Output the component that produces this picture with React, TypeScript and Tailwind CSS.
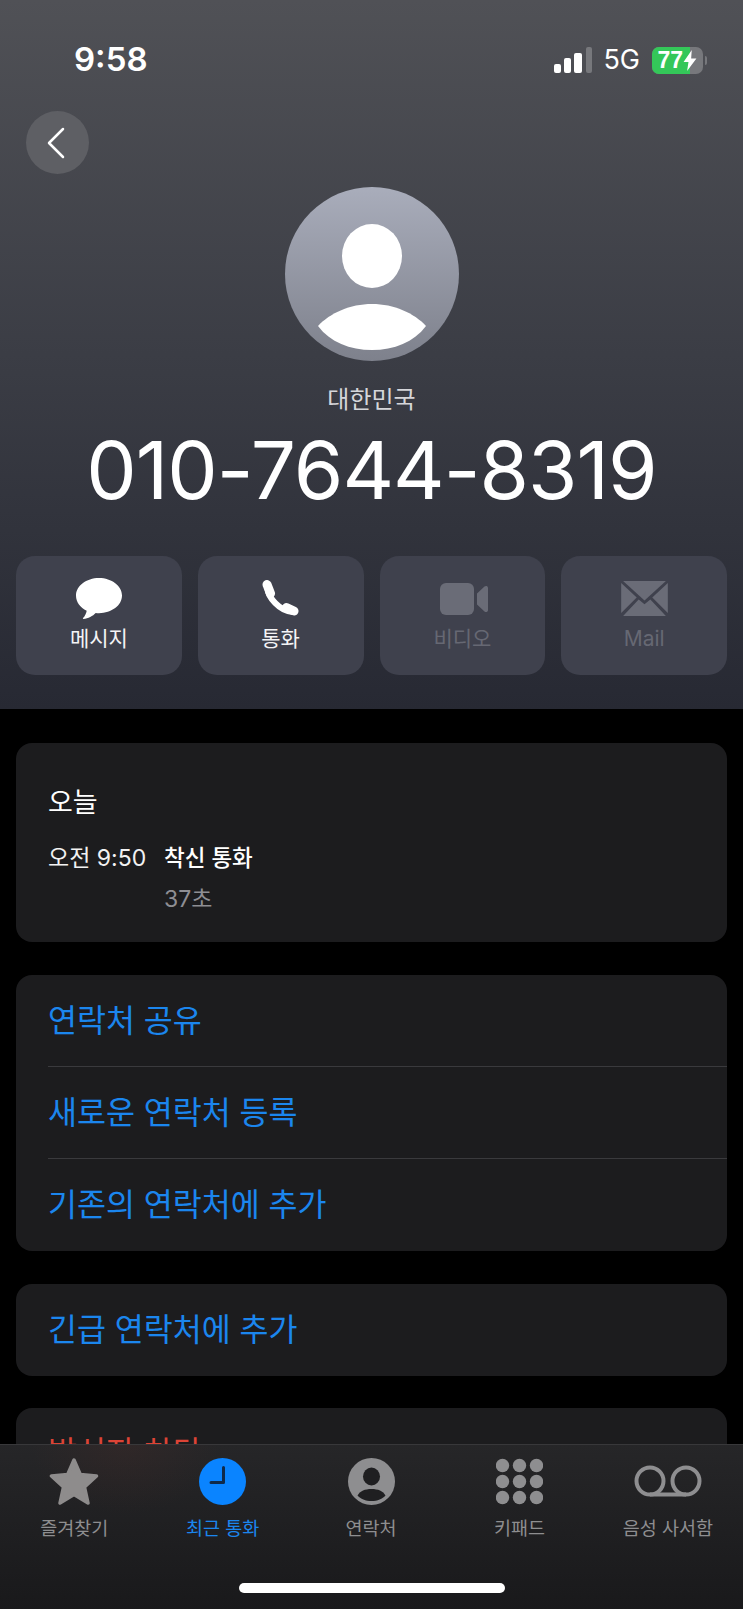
import React from "react";

const sans = "font-['Inter','Noto_Sans_CJK_KR',sans-serif]";

function Action({ icon, label, dim }: { icon: React.ReactNode; label: string; dim?: boolean }) {
  return (
    <div className="flex h-[119px] flex-1 flex-col items-center rounded-[19px] bg-[#3f414d]">
      <div className="flex h-[71px] w-full items-center justify-center pt-[14px]">{icon}</div>
      <div className={`-mt-[2px] text-[21px] leading-[28px] ${dim ? "text-[#666873]" : "text-[#f4f4f6]"}`}>{label}</div>
    </div>
  );
}

function Row({ text, last }: { text: string; last?: boolean }) {
  return (
    <div className="pl-[32px]">
      <div className={`flex h-[92px] items-center text-[31.5px] text-[#1b86ee] ${last ? "" : "border-b border-[#3a3a3d]"}`}>{text}</div>
    </div>
  );
}

function Tab({ icon, label, active }: { icon: React.ReactNode; label: string; active?: boolean }) {
  return (
    <div className="flex flex-1 flex-col items-center">
      <div className="flex h-[60px] items-end justify-center">{icon}</div>
      <div className={`mt-[10px] text-[18.5px] leading-[26px] ${active ? "text-[#1b86ee]" : "text-[#8e8e90]"}`}>{label}</div>
    </div>
  );
}

export default function App() {
  return (
    <div className={`flex h-[1609px] w-[743px] flex-col overflow-hidden bg-black ${sans}`}>
      <div className="flex min-h-0 flex-1 flex-col overflow-hidden">
        <header className="h-[709px] shrink-0 bg-gradient-to-b from-[#505156] via-[#3b3d45] to-[#272933]">
          <div className="flex h-[111px] items-start justify-between pl-[74px] pr-[36px] pt-[39px]">
            <div className="text-[33px] font-semibold leading-[40px] text-white">9:58</div>
            <div className="flex items-center pt-[6px]">
              <svg width="40" height="26" viewBox="0 0 40 26" fill="#fff">
                <rect x="1" y="17" width="7" height="9" rx="2" />
                <rect x="11" y="11" width="7" height="15" rx="2" />
                <rect x="21" y="6" width="8" height="20" rx="2" />
                <rect x="33" y="0" width="6" height="26" rx="2" fill="#77787c" />
              </svg>
              <span className="ml-[10px] text-[27px] leading-[30px] text-white">5G</span>
              <div className="relative ml-[12px] flex h-[27px] w-[51px] overflow-hidden rounded-[7px] bg-[#77787c]">
                <div className="flex h-full w-[38px] items-center justify-end bg-[#34c759]">
                  <span className="pr-[7px] font-['Liberation_Sans',sans-serif] text-[23px] font-bold leading-none text-white">77</span>
                </div>
                <svg className="absolute left-[31px] top-[3px]" width="14" height="21" viewBox="0 0 12 21" fill="#fff" preserveAspectRatio="none">
                  <path d="M7.5 0 0.5 12h4.2L3.5 21 11.5 8.500H7z" />
                </svg>
              </div>
              <div className="ml-[2px] h-[9px] w-[2px] rounded-r-full bg-[#77787c]" />
            </div>
          </div>
          <div className="ml-[26px] flex h-[63px] w-[63px] items-center justify-center rounded-full bg-[#5e5f64]">
            <svg width="22" height="32" viewBox="0 0 22 32" fill="none" stroke="#fff" strokeWidth="2.500" strokeLinecap="round" strokeLinejoin="round" className="mr-[3px]">
              <path d="M18 2 4 16l14 14" />
            </svg>
          </div>
          <div className="-mt-[1px] flex flex-col items-center">
            <div className="mt-[14px] h-[174px] w-[174px] overflow-hidden rounded-full bg-gradient-to-b from-[#a9adbb] to-[#7e818c]">
              <svg width="174" height="174" viewBox="0 0 174 174" fill="#fff">
                <ellipse cx="87" cy="69" rx="30" ry="32" />
                <path d="M33 139c12-13 32-22 54-22s42 9 54 22c-12 16-32 24-54 24s-42-8-54-24z" />
              </svg>
            </div>
            <div className="mt-[23px] text-[24px] leading-[32px] text-[#d5d6da]">대한민국</div>
            <div className="mt-[8px] text-[80px] font-normal leading-[92px] tracking-[-1px] text-white">010-7644-8319</div>
          </div>
          <div className="mt-[40px] flex gap-[16px] px-[16px]">
            <Action
              label="메시지"
              icon={
                <svg width="46" height="41" viewBox="0 0 46 41" fill="#fff">
                  <path d="M23 0C10.3 0 0 7.900 0 17.700c0 6.400 4.300 11.900 10.700 15-.4 2.800-2 5.600-3.700 7.400-.3.400 0 .9.500.9 4.600-.4 9.400-3 12.200-6 1.100.1 2.200.2 3.300.2 12.700 0 23-7.800 23-17.600C46 7.900 35.700 0 23 0z" />
                </svg>
              }
            />
            <Action
              label="통화"
              icon={
                <svg width="37" height="37" viewBox="0 0 37 37" fill="none" stroke="#fff" strokeLinecap="round" strokeLinejoin="round">
                  <path d="M5.500 8c.5 9.500 12 23 25 24" strokeWidth="6" />
                  <path d="M5 4.500 8.500 13.500" strokeWidth="9" />
                  <path d="M24.500 27.500 32 31" strokeWidth="9" />
                </svg>
              }
            />
            <Action
              dim
              label="비디오"
              icon={
                <svg width="48" height="32" viewBox="0 0 48 32" fill="#6a6c77" className="ml-[3px]">
                  <rect x="0" y="0" width="34" height="32" rx="6" />
                  <path d="M37 10.500 44.500 3.500c1.300-1 3.500-.6 3.500 1.500v22c0 2.100-2.200 2.500-3.500 1.500L37 21.500z" />
                </svg>
              }
            />
            <Action
              dim
              label="Mail"
              icon={
                <svg width="47" height="35" viewBox="0 0 48 36" fill="#6a6c77">
                  <path d="M2 0h44L24 20z" />
                  <path d="M0 2v31l16-16z" />
                  <path d="M48 2v31L32 17z" />
                  <path d="M2 36h44L30 19l-6 5-6-5z" />
                </svg>
              }
            />
          </div>
        </header>

        <main className="flex flex-col gap-[33px] px-[16px] pt-[34px]">
          <section className="h-[199px] rounded-[16px] bg-[#1c1c1e] pl-[32px] pt-[42px]">
            <div className="text-[27px] leading-[36px] text-white">오늘</div>
            <div className="mt-[21px] flex items-center text-[23px] leading-[32px]">
              <span className="w-[116px] text-[#f2f2f2]">오전 9:50</span>
              <span className="text-[22.5px] font-medium text-white">착신 통화</span>
            </div>
            <div className="ml-[116px] mt-[9px] text-[23px] leading-[32px] text-[#8e8e93]">37초</div>
          </section>
          <section className="rounded-[16px] bg-[#1c1c1e]">
            <Row text="연락처 공유" />
            <Row text="새로운 연락처 등록" />
            <Row text="기존의 연락처에 추가" last />
          </section>
          <section className="rounded-[16px] bg-[#1c1c1e]">
            <Row text="긴급 연락처에 추가" last />
          </section>
          <section className="-mt-[1px] rounded-[16px] bg-[#1c1c1e]">
            <div className="flex h-[90px] items-center pl-[32px] text-[31.5px] text-[#dc4436]">발신자 차단</div>
          </section>
        </main>
      </div>

      <nav className="relative h-[165px] shrink-0 border-t border-[#38383a] bg-gradient-to-b from-[#262628] to-[#19191b]">
        <div className="absolute left-[30px] top-0 h-[70px] w-[190px] bg-[radial-gradient(ellipse_at_top,rgba(110,50,40,0.14),transparent_70%)]" />
        <div className="relative flex pr-[1px]">
          <Tab
            label="즐겨찾기"
            icon={
              <svg width="50" height="47" viewBox="0 0 50 47" fill="#8e8c8c" stroke="#8e8c8c" strokeWidth="3.500" strokeLinejoin="round">
                <path d="M25 2 31.300 16.500 47.500 18 35.500 29 39 45 25 36.500 11 45 14.500 29 2.500 18 18.700 16.500z" />
              </svg>
            }
          />
          <Tab
            active
            label="최근 통화"
            icon={
              <svg width="47" height="47" viewBox="0 0 47 47">
                <circle cx="23.500" cy="23.500" r="23.500" fill="#0a84ff" />
                <path d="M24.500 9.500v15H12" fill="none" stroke="#0f2a4a" strokeWidth="3" strokeLinecap="round" strokeLinejoin="round" />
              </svg>
            }
          />
          <Tab
            label="연락처"
            icon={
              <svg width="47" height="47" viewBox="0 0 47 47">
                <defs>
                  <clipPath id="contact-circle">
                    <circle cx="23.500" cy="23.500" r="23.500" />
                  </clipPath>
                </defs>
                <circle cx="23.500" cy="23.500" r="23.500" fill="#8e8e90" />
                <g clipPath="url(#contact-circle)" fill="#1f1f21">
                  <ellipse cx="23.500" cy="18.500" rx="8.500" ry="9" />
                  <path d="M9.500 37.500c2.500-4.500 7.500-6.500 14-6.500s11.500 2 14 6.500C34.500 41 29.500 43 23.500 43S12.500 41 9.500 37.500z" />
                </g>
              </svg>
            }
          />
          <Tab
            label="키패드"
            icon={
              <svg width="47" height="47" viewBox="0 0 47 47" fill="#8e8e90">
                {[7.500, 23.500, 39.500].map((cy) =>
                  [6.500, 23.500, 40.500].map((cx) => <circle key={`${cx}-${cy}`} cx={cx} cy={cy} r="6.700" />)
                )}
              </svg>
            }
          />
          <Tab
            label="음성 사서함"
            icon={
              <svg width="68" height="32" viewBox="0 0 68 32" fill="none" stroke="#8e8e90" strokeWidth="4" className="mb-[8px]">
                <circle cx="16" cy="16" r="13.500" />
                <circle cx="52" cy="16" r="13.500" />
                <path d="M16 29.500h36" />
              </svg>
            }
          />
        </div>
        <div className="absolute bottom-[16px] left-[239px] h-[10px] w-[266px] rounded-full bg-white" />
      </nav>
    </div>
  );
}
